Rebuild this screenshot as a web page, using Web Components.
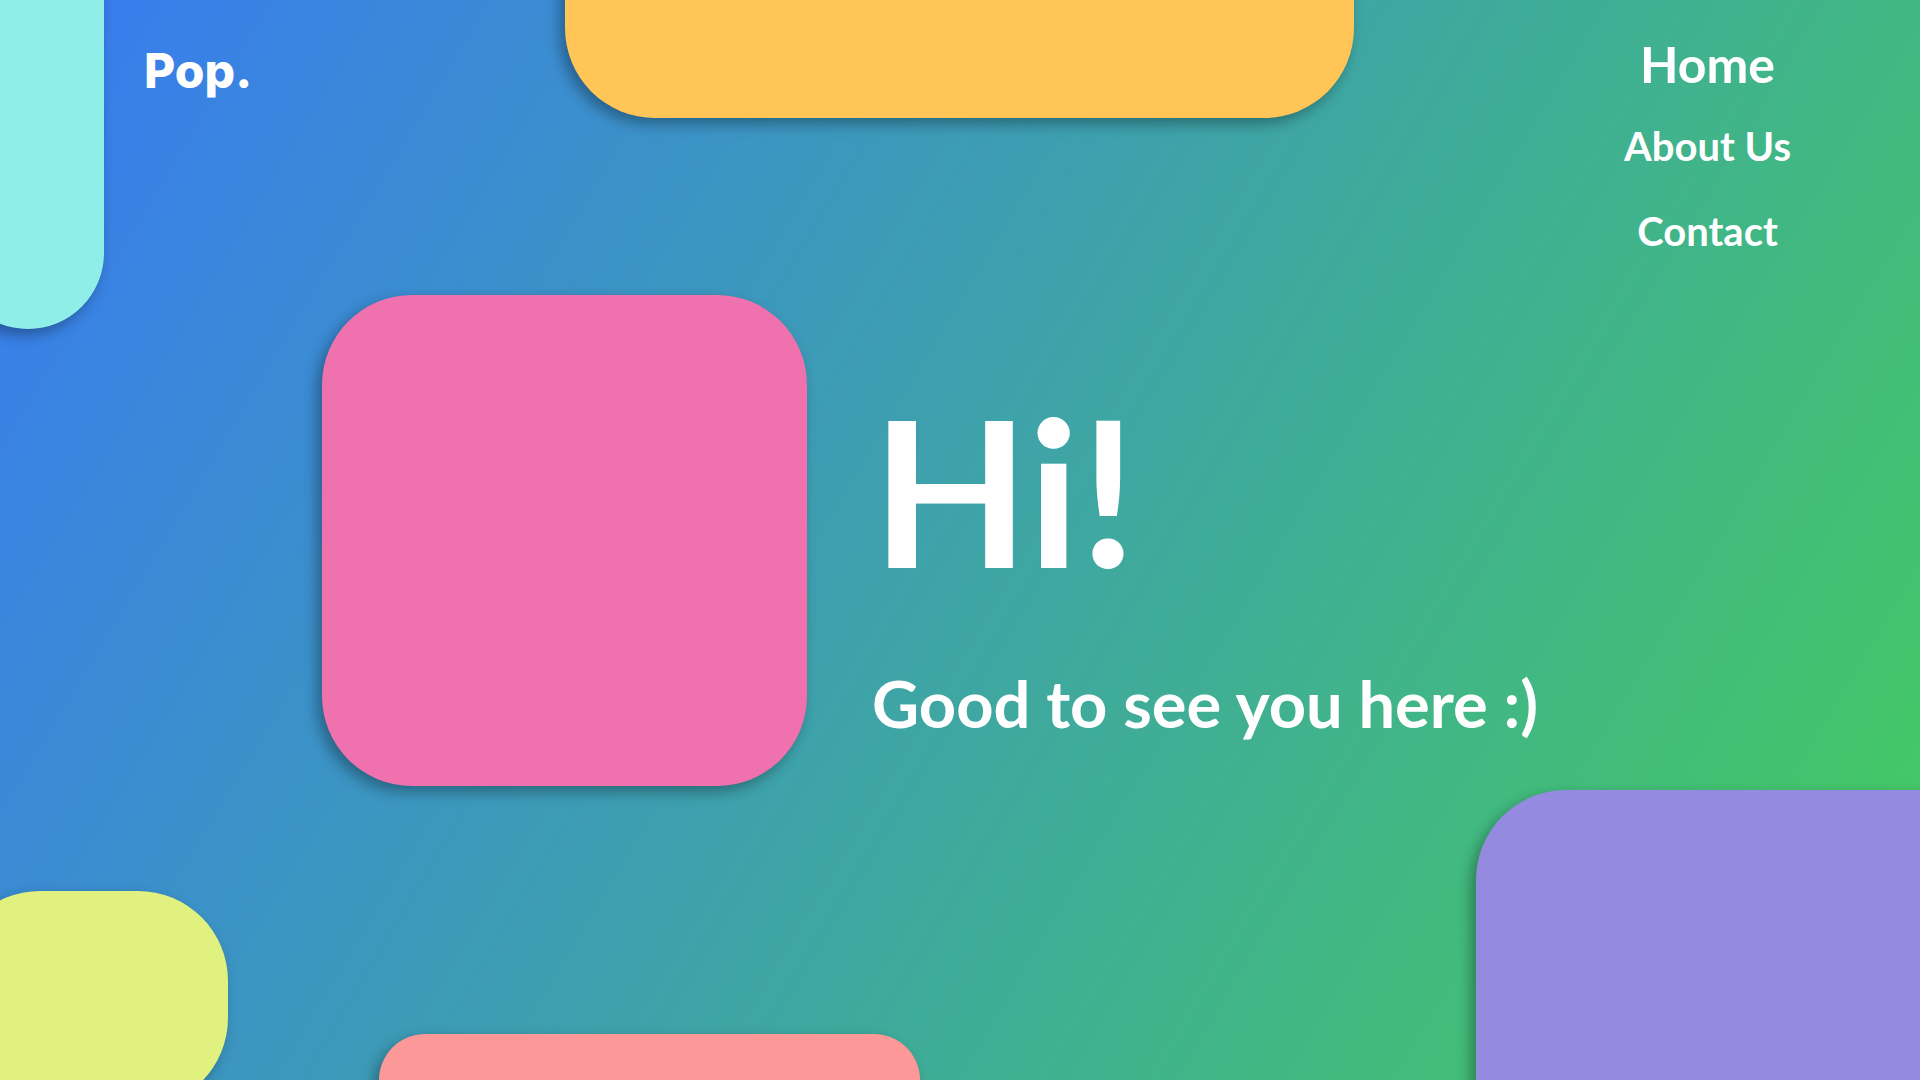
<!DOCTYPE html>
<html lang="en">
<head>
<meta charset="utf-8">
<title>Pop.</title>
<style>
  html, body { margin: 0; min-height: 100%; }
  body { font-family: Lato, "Open Sans", sans-serif; color: #fff; }
</style>
</head>
<body>
<pop-page>
  <pop-header slot="header">
    <pop-brand href="#">Pop.</pop-brand>
    <pop-nav slot="nav">
      <pop-link href="#home" current>Home</pop-link>
      <pop-link href="#about">About Us</pop-link>
      <pop-link href="#contact">Contact</pop-link>
    </pop-nav>
  </pop-header>
  <pop-hero>
    <span slot="title">Hi!</span>
    <span slot="text">Good to see you here :)</span>
  </pop-hero>
</pop-page>

<script>
  const define = (name, html, setup) => {
    const template = document.createElement('template');
    template.innerHTML = html;
    customElements.define(name, class extends HTMLElement {
      constructor() {
        super();
        this.attachShadow({ mode: 'open' }).append(template.content.cloneNode(true));
      }
      connectedCallback() { if (setup) setup(this); }
    });
  };

  const passHref = (el) => {
    el.shadowRoot.querySelector('a').setAttribute('href', el.getAttribute('href') || '#');
  };

  // A rounded block of colour with a soft shadow to the lower left.
  define('pop-block', `
    <style>
      :host {
        display: block;
        border-radius: var(--block-radius, 90px);
        background: var(--block-color);
        box-shadow: -5px 6px 14px rgba(0, 0, 0, .33);
      }
    </style>`);

  // Decorative blocks floating off the edges of the page.
  define('pop-backdrop', `
    <style>
      :host { position: absolute; inset: 0; overflow: hidden; }
      pop-block { position: absolute; }
      .aqua   { --block-color: #90eee8; --block-radius: 76px; left: -48px; top: -100px; width: 152px; height: 429px; }
      .orange { --block-color: #ffc556; left: 565px; right: 566px; top: -120px; height: 238px; }
      .lime   { --block-color: #e0f17f; left: -50px; bottom: -28px; width: 278px; height: 217px; }
      .coral  { --block-color: #fc9897; --block-radius: 46px; left: 379px; bottom: -80px; width: 541px; height: 126px; }
      .violet { --block-color: #948be1; right: -120px; bottom: -120px; width: 564px; height: 410px; }
    </style>
    <pop-block class="aqua"></pop-block>
    <pop-block class="orange"></pop-block>
    <pop-block class="lime"></pop-block>
    <pop-block class="coral"></pop-block>
    <pop-block class="violet"></pop-block>`);

  define('pop-brand', `
    <style>
      :host { display: block; }
      a { display: block; color: inherit; text-decoration: none; font-family: Inter, sans-serif; font-size: 48px; line-height: 56px; font-weight: 800; }
    </style>
    <a><slot></slot></a>`, passHref);

  define('pop-link', `
    <style>
      :host { display: block; }
      a { display: block; color: inherit; text-decoration: none; font-size: 40px; line-height: 48px; font-weight: 700; }
      :host([current]) a { font-size: 50px; line-height: 42px; }
    </style>
    <a><slot></slot></a>`, passHref);

  define('pop-nav', `
    <style>
      :host { display: block; }
      nav { display: flex; flex-direction: column; align-items: center; gap: 37px; }
    </style>
    <nav aria-label="Main"><slot></slot></nav>`);

  define('pop-header', `
    <style>
      :host { display: block; }
      header { display: flex; justify-content: space-between; align-items: flex-start; padding: 43px 129px 0 144px; }
    </style>
    <header><slot></slot><slot name="nav"></slot></header>`);

  define('pop-hero', `
    <style>
      :host { display: block; }
      section { display: flex; gap: 65px; padding: 40px 120px 0 322px; }
      pop-block { --block-color: #ef72ae; flex: none; width: 485px; height: 491px; }
      .copy { display: flex; flex-direction: column; gap: 70px; padding-top: 90px; }
      h1, p { margin: 0; font-weight: 700; }
      h1 { font-size: 204px; line-height: 208px; }
      p { font-size: 65px; line-height: 80px; }
    </style>
    <section>
      <pop-block></pop-block>
      <div class="copy">
        <h1><slot name="title"></slot></h1>
        <p><slot name="text"></slot></p>
      </div>
    </section>`);

  define('pop-page', `
    <style>
      :host {
        display: block;
        position: relative;
        min-height: 100vh;
        background: linear-gradient(121deg, #387af3, #44cb60 98%);
      }
      main { position: relative; }
    </style>
    <pop-backdrop></pop-backdrop>
    <main><slot name="header"></slot><slot></slot></main>`);
</script>
</body>
</html>
